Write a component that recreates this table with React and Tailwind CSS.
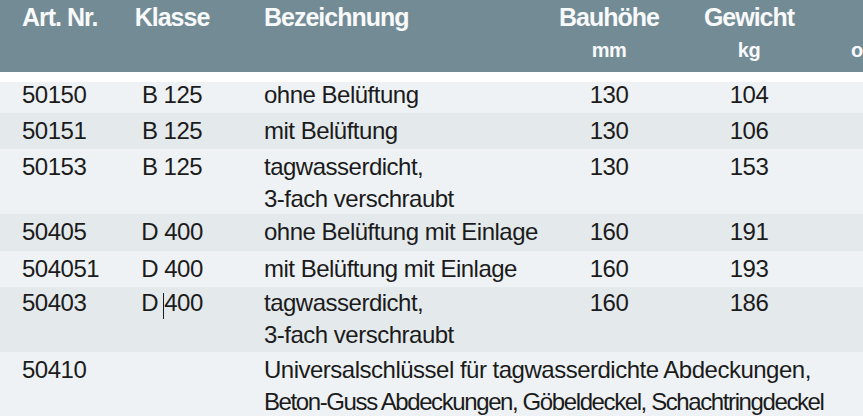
import React from "react";

const rows = [
  { nr: "50150", kl: "B 125", bez: ["ohne Belüftung"], h: "130", g: "104", bg: "bg-[#eef2f5]", hgt: "h-[31px]", first: true },
  { nr: "50151", kl: "B 125", bez: ["mit Belüftung"], h: "130", g: "106", bg: "bg-[#e4e9ec]", hgt: "h-[36px]" },
  { nr: "50153", kl: "B 125", bez: ["tagwasserdicht,", "3-fach verschraubt"], h: "130", g: "153", bg: "bg-[#eef2f5]", hgt: "h-[65px]" },
  { nr: "50405", kl: "D 400", bez: ["ohne Belüftung mit Einlage"], h: "160", g: "191", bg: "bg-[#e4e9ec]", hgt: "h-[37px]" },
  { nr: "504051", kl: "D 400", bez: ["mit Belüftung mit Einlage"], h: "160", g: "193", bg: "bg-[#eef2f5]", hgt: "h-[36px]" },
  { nr: "50403", kl: "D 400", bez: ["tagwasserdicht,", "3-fach verschraubt"], h: "160", g: "186", bg: "bg-[#e4e9ec]", hgt: "h-[65px]", caret: true, pt0: true },
];

const font = { fontFamily: '"Liberation Sans", Arial, sans-serif' };
const grid = "grid grid-cols-[122px_100px_337px_100px_180px_1fr]";

export default function App() {
  return (
    <div className="w-[863px] h-[416px] overflow-hidden bg-[#eef2f5] text-[#1b1b1b]" style={font}>
      <div className={`${grid} h-[72px] bg-[#738b95] text-[#f7f9fa] font-bold`}>
        <div className="pl-[22px] pt-[2px] text-[25px] leading-[30px] tracking-[-1px] whitespace-nowrap">Art. Nr.</div>
        <div className="pt-[2px] text-[25px] leading-[30px] tracking-[-1px] text-center">Klasse</div>
        <div className="pl-[42px] pt-[2px] text-[25px] leading-[30px] tracking-[-1px]">Bezeichnung</div>
        <div className="flex flex-col items-center pt-[2px]">
          <span className="text-[25px] leading-[30px] tracking-[-1px]">Bauhöhe</span>
          <span className="mt-[6px] text-[20px] leading-[24px] tracking-[-0.5px]">mm</span>
        </div>
        <div className="flex flex-col items-center pt-[2px]">
          <span className="text-[25px] leading-[30px] tracking-[-1px]">Gewicht</span>
          <span className="mt-[6px] text-[20px] leading-[24px] tracking-[-0.5px]">kg</span>
        </div>
        <div className="flex flex-col pl-[12px] pt-[2px]">
          <span className="text-[25px] leading-[30px]">&nbsp;</span>
          <span className="mt-[6px] text-[20px] leading-[24px] whitespace-nowrap">o</span>
        </div>
      </div>
      <div className="h-[10px] bg-white" />
      {rows.map((r) => (
        <div
          key={r.nr}
          className={`${grid} ${r.bg} ${r.hgt} text-[24px] tracking-[-0.5px] ${r.first ? "leading-[26px]" : "leading-[32px]"} ${r.first || r.pt0 ? "pt-0" : "pt-[2px]"}`}
        >
          <div className="pl-[22px]">{r.nr}</div>
          <div className="text-center whitespace-nowrap">
            {r.caret ? (
              <>
                D <span className="relative inline-block h-0 w-0"><span className="absolute left-[-1px] top-[-18px] h-[26px] w-px bg-[#1b1b1b]" /></span>400
              </>
            ) : (
              r.kl
            )}
          </div>
          <div className="pl-[42px] whitespace-nowrap">
            {r.bez.map((b) => (
              <div key={b}>{b}</div>
            ))}
          </div>
          <div className="text-center">{r.h}</div>
          <div className="text-center">{r.g}</div>
          <div />
        </div>
      ))}
      <div className={`${grid} bg-[#eef2f5] h-[64px] pt-[2px] text-[24px] leading-[32px] tracking-[-0.5px]`}>
        <div className="pl-[22px]">50410</div>
        <div />
        <div className="col-span-4 pl-[42px] whitespace-nowrap">
          <div>Universalschlüssel für tagwasserdichte Abdeckungen,</div>
          <div className="tracking-[-1.4px]">Beton-Guss Abdeckungen, Göbeldeckel, Schachtringdeckel</div>
        </div>
      </div>
    </div>
  );
}
